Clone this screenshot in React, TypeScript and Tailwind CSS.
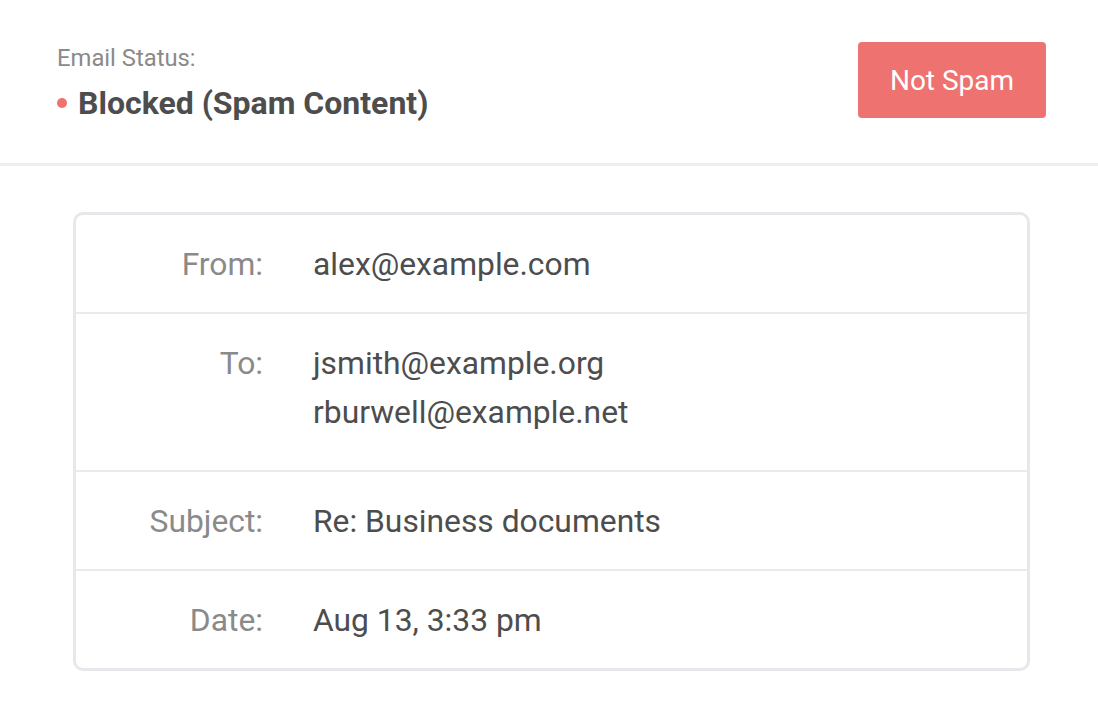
const rows: { label: string; values: string[] }[] = [
  { label: "From:", values: ["alex@example.com"] },
  { label: "To:", values: ["jsmith@example.org", "rburwell@example.net"] },
  { label: "Subject:", values: ["Re: Business documents"] },
  { label: "Date:", values: ["Aug 13, 3:33 pm"] },
];

export default function App() {
  return (
    <div className="min-h-screen bg-white font-['Roboto',sans-serif]">
      <div className="flex h-[166px] items-start justify-between border-b-[3px] border-[#edeeee] pl-[57px] pr-[52px] pt-[42px]">
        <div className="flex flex-col">
          <span className="text-[23.8px] leading-[32px] text-[#8a8a8a]">Email Status:</span>
          <div className="mt-[9px] flex items-center gap-[11px]">
            <span className="h-[10px] w-[10px] rounded-full bg-[#ee7370]" />
            <span className="text-[32px] font-bold leading-[40px] text-[#4d4d4d]">
              Blocked (Spam Content)
            </span>
          </div>
        </div>
        <button
          type="button"
          className="h-[76px] w-[188px] rounded-[4px] bg-[#ee7370] pt-[2px] text-[28px] text-white"
        >
          Not Spam
        </button>
      </div>

      <div className="ml-[73px] mt-[46px] w-[957px] rounded-[10px] border-[3px] border-[#e8e8ec]">
        {rows.map((row, i) => (
          <div
            key={row.label}
            className={`flex gap-[50px] ${i > 0 ? "border-t-2 border-[#ebebeb]" : ""} ${
              row.values.length > 1 ? "pb-[33px] pt-[25px]" : "pb-[23px] pt-[25px]"
            }`}
          >
            <div className="w-[187px] text-right text-[31.8px] leading-[49px] text-[#8a8a8a]">
              {row.label}
            </div>
            <div className="flex flex-col text-[31.8px] leading-[49px] text-[#4d4d4d]">
              {row.values.map((v) => (
                <span key={v}>{v}</span>
              ))}
            </div>
          </div>
        ))}
      </div>
    </div>
  );
}
